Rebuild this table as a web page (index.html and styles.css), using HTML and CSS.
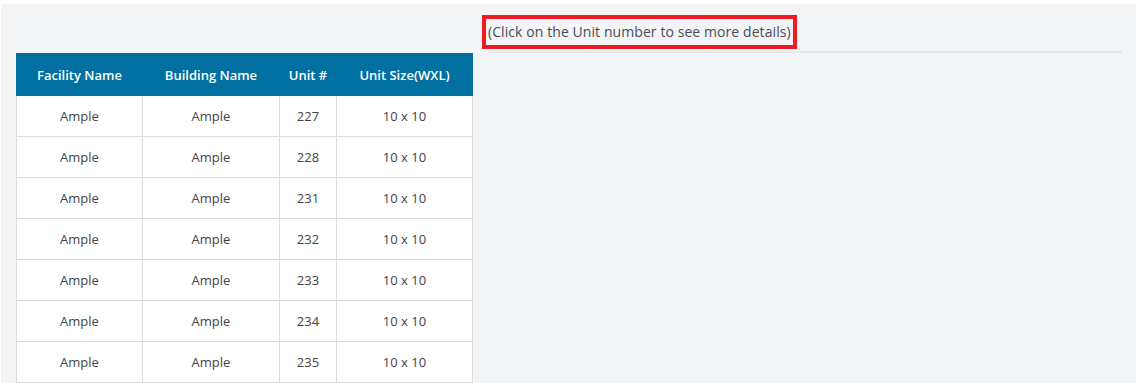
FILE: index.html
```html
<!DOCTYPE html>
<html lang="en">
<head>
  <meta charset="UTF-8">
  <meta name="viewport" content="width=device-width, initial-scale=1.0">
  <title>Units</title>
  <link rel="stylesheet" href="styles.css">
</head>
<body>
  <div class="page">
    <div class="units-col">
      <table class="units">
        <thead>
          <tr>
            <th class="c-facility">Facility Name</th>
            <th class="c-building">Building Name</th>
            <th class="c-unit">Unit #</th>
            <th class="c-size">Unit Size(WXL)</th>
          </tr>
        </thead>
        <tbody>
          <tr><td>Ample</td><td>Ample</td><td>227</td><td>10 x 10</td></tr>
          <tr><td>Ample</td><td>Ample</td><td>228</td><td>10 x 10</td></tr>
          <tr><td>Ample</td><td>Ample</td><td>231</td><td>10 x 10</td></tr>
          <tr><td>Ample</td><td>Ample</td><td>232</td><td>10 x 10</td></tr>
          <tr><td>Ample</td><td>Ample</td><td>233</td><td>10 x 10</td></tr>
          <tr><td>Ample</td><td>Ample</td><td>234</td><td>10 x 10</td></tr>
          <tr><td>Ample</td><td>Ample</td><td>235</td><td>10 x 10</td></tr>
        </tbody>
      </table>
    </div>

    <div class="detail-col">
      <span class="hint">(Click on the Unit number to see more details)</span>
      <div class="divider"></div>
    </div>
  </div>
</body>
</html>
```

FILE: styles.css
```css
body {
  margin: 0;
  background: #ffffff;
  font-family: 'Open Sans', 'Liberation Sans', sans-serif;
  color: #444;
  overflow: hidden;
}

.page {
  margin: 4px 0 0 1px;
  min-height: 379px;
  background: #f3f4f6;
  display: flex;
  align-items: flex-start;
}

.units-col {
  padding: 49px 0 0 15px;
}

.units {
  border-collapse: collapse;
  background: #fff;
  font-size: 13px;
}

.units th {
  background: #0170a1;
  color: #fff;
  font-weight: 600;
  height: 41px;
  padding: 0;
  border: 1px solid #0170a1;
}

.units td {
  height: 40px;
  padding: 0;
  text-align: center;
  border: 1px solid #dcdcdc;
  color: #444;
}

.c-facility { width: 125px; }
.c-building { width: 136px; }
.c-unit { width: 56px; }
.c-size { width: 135px; }

.detail-col {
  flex: 1;
  margin: 11px 14px 0 9px;
  display: flex;
  flex-direction: column;
  align-items: flex-start;
}

.hint {
  font-size: 14px;
  line-height: 20px;
  letter-spacing: 0.08px;
  color: #4a4d57;
  padding: 3px 2px;
  border: 4px solid #ed1c24;
}

.divider {
  align-self: stretch;
  margin: 2px 0 0 7px;
  height: 2px;
  background: #e5e7ea;
}
```
